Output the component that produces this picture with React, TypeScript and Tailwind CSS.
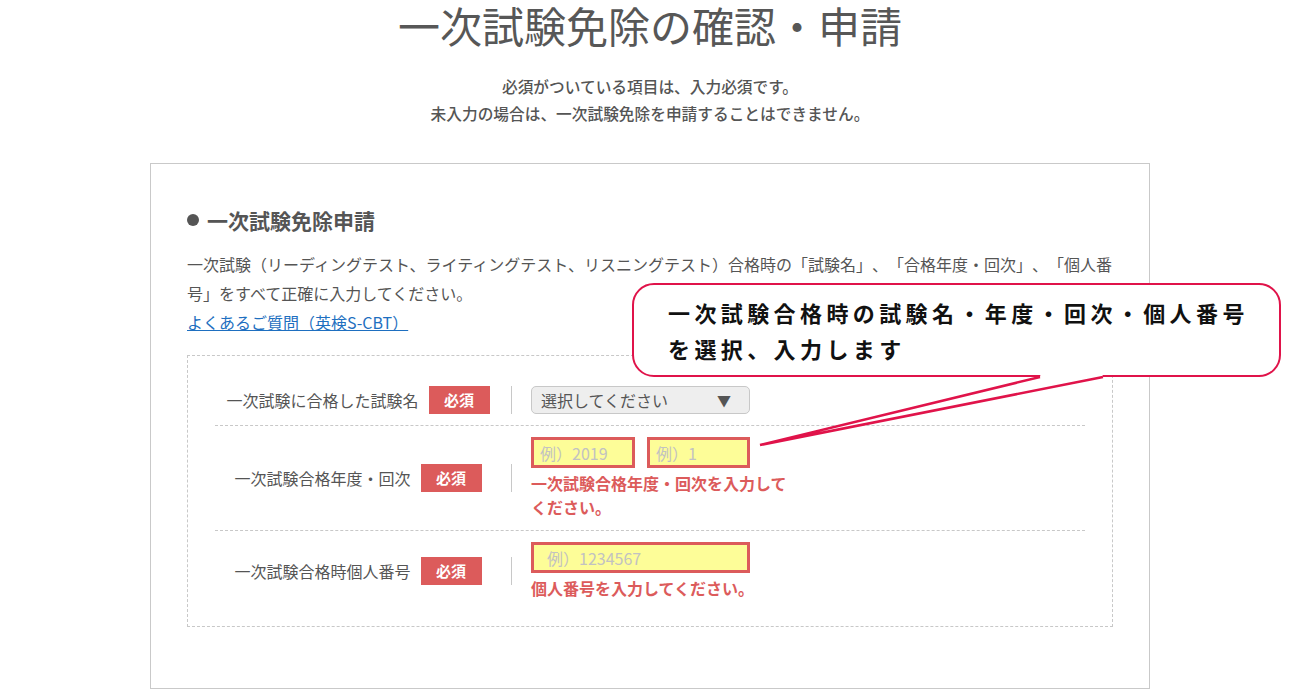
const jp = "font-['Noto_Sans_CJK_JP','Noto_Sans',sans-serif]"

function Badge() {
  return (
    <span className="flex h-[28px] w-[61px] shrink-0 items-center justify-center bg-[#dc5b5b] text-[15px] font-bold text-white">
      必須
    </span>
  )
}

function Row({ label, first, children }: { label: string; first?: boolean; children: React.ReactNode }) {
  return (
    <div
      className={
        'flex items-center py-[11px] ' + (first ? '' : 'border-t border-dashed border-[#c8c8c8]')
      }
    >
      <div className="flex w-[286px] items-center justify-center gap-[10px]">
        <span className="text-[16px] text-[#555]">{label}</span>
        <Badge />
      </div>
      <div className="ml-[10px] mr-[19px] h-[28px] w-px bg-[#c8c8c8]" />
      <div className="w-[262px]">{children}</div>
    </div>
  )
}

function Field({ placeholder, className }: { placeholder: string; className: string }) {
  return (
    <div
      className={
        'flex h-[31px] items-center border-[3px] border-[#dc5b5b] bg-[#fdfd98] pl-[6px] text-[16px] text-[#c2c2c2] ' +
        className
      }
    >
      {placeholder}
    </div>
  )
}

function ErrorText({ children }: { children: React.ReactNode }) {
  return <p className="mt-[3px] text-[16px] font-bold leading-[24px] text-[#dc5b5b]">{children}</p>
}

export default function App() {
  return (
    <div className={'relative w-[1300px] bg-white pb-[10px] text-[#555] [text-spacing-trim:space-all] ' + jp}>
      <h1 className="text-center text-[42px] leading-[50px] text-[#575757]">一次試験免除の確認・申請</h1>
      <div className="mt-[23px] text-center text-[15.7px] font-medium leading-[27px] text-[#555]">
        <p>必須がついている項目は、入力必須です。</p>
        <p>未入力の場合は、一次試験免除を申請することはできません。</p>
      </div>

      <div className="mx-auto mt-[36px] w-[1000px] border border-[#c9c9c9] px-[36px] pb-[61px] pt-[42px]">
        <h2 className="flex items-center gap-[8px] text-[21px] font-bold leading-[28px] text-[#555]">
          <span className="h-[12px] w-[12px] rounded-full bg-[#555]" />
          一次試験免除申請
        </h2>
        <p className="mt-[16px] text-[16px] leading-[29px] text-[#555]">
          一次試験（リーディングテスト、ライティングテスト、リスニングテスト）合格時の「試験名」、「合格年度・回次」、「個人番
          <br />
          号」をすべて正確に入力してください。
        </p>
        <a href="#" className="block w-fit text-[16px] leading-[28px] text-[#1e6fc0] underline">
          よくあるご質問（英検S-CBT）
        </a>

        <div className="mt-[19px] border border-dashed border-[#c8c8c8] px-[27px] pb-[15px] pt-[19px]">
          <Row label="一次試験に合格した試験名" first>
            <div className="flex h-[28px] w-[219px] items-center justify-between rounded-[5px] border border-[#c8c8c8] bg-[#eeeeee] pl-[9px] pr-[18px] text-[16px] text-[#555]">
              <span>選択してください</span>
              <span className="text-[14px]">▼</span>
            </div>
          </Row>
          <Row label="一次試験合格年度・回次">
            <div className="flex gap-[12px]">
              <Field placeholder="例）2019" className="w-[104px]" />
              <Field placeholder="例）1" className="w-[103px]" />
            </div>
            <ErrorText>一次試験合格年度・回次を入力してください。</ErrorText>
          </Row>
          <Row label="一次試験合格時個人番号">
            <Field placeholder="例）1234567" className="w-[219px] pl-[13px]" />
            <ErrorText>個人番号を入力してください。</ErrorText>
          </Row>
        </div>
      </div>

      {/* callout annotation */}
      <div className="absolute left-[632px] top-[283px] h-[94px] w-[649px] rounded-[22px] border-[2.5px] border-[#e0134a] bg-white pl-[34px] pt-[9px] text-[22px] font-bold leading-[36px] tracking-[4.4px] text-[#111]">
        <p>一次試験合格時の試験名・年度・回次・個人番号</p>
        <p>を選択、入力します</p>
      </div>
      <svg className="absolute left-[750px] top-[370px]" width="360" height="80" viewBox="0 0 360 80">
        <polygon points="291,2 352,2 353,7 10,75 290,7" fill="#fff" />
        <polyline points="290,7 10,75 353,7" fill="none" stroke="#e0134a" strokeWidth="2.5" />
      </svg>
    </div>
  )
}
